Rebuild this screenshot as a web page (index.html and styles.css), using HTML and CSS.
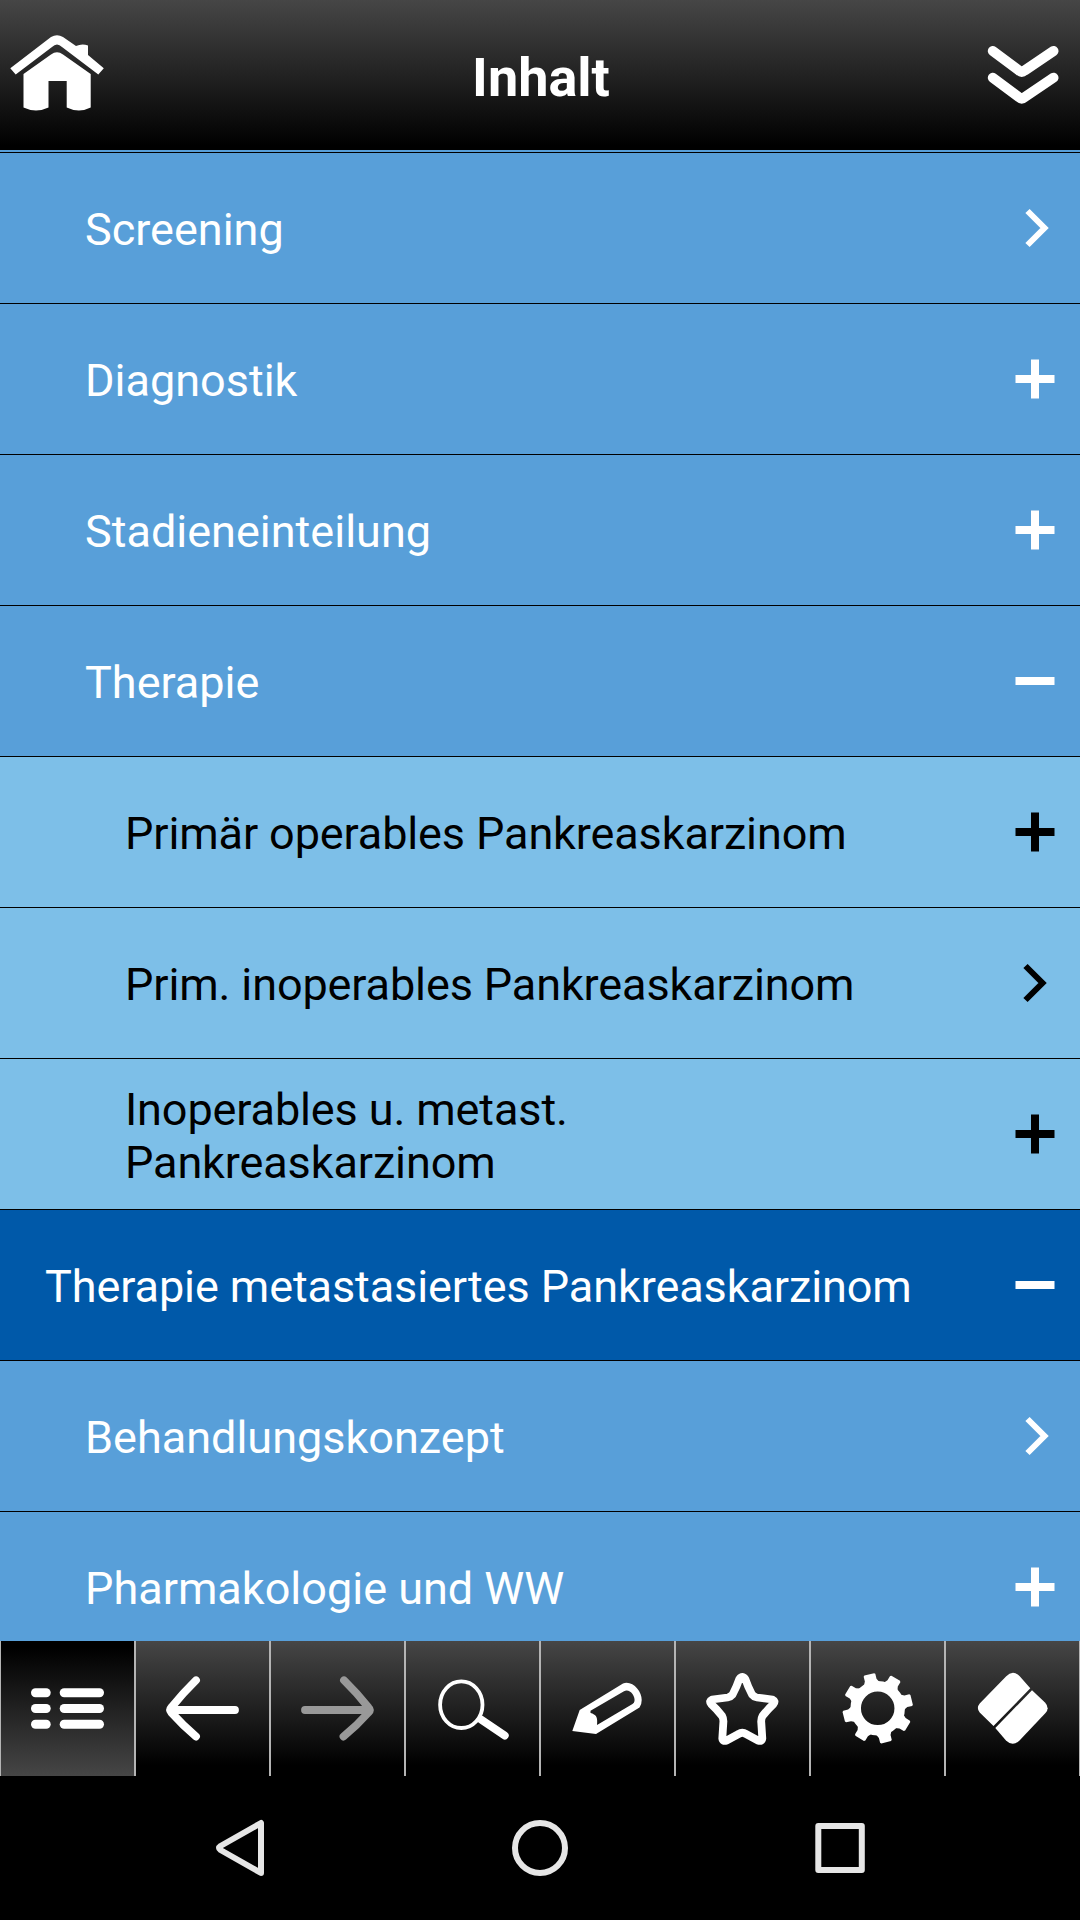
FILE: index.html
```html
<!DOCTYPE html>
<html lang="de">
<head>
    <meta charset="UTF-8">
    <meta name="viewport" content="width=device-width, initial-scale=1.0">
    <title>Inhalt</title>
    <link rel="stylesheet" href="styles.css">
</head>
<body>

<!-- Shared icons -->
<svg class="sprite">
    <symbol id="plus" viewBox="0 0 40 40"><path d="M0.5 20H39.5M20 0.5V39.5" stroke="currentColor" stroke-width="8"/></symbol>
    <symbol id="minus" viewBox="0 0 40 40"><path d="M0.5 20H39.5" stroke="currentColor" stroke-width="8"/></symbol>
    <symbol id="next" viewBox="0 0 40 40"><path d="M12.5 3L29.5 20L12.5 37" fill="none" stroke="currentColor" stroke-width="6"/></symbol>
</svg>

<div class="screen">
    <!-- Header -->
    <header class="header">
        <svg class="header-icon" viewBox="0 0 114 150">
            <path d="M10.3 68.3L51 37Q57 33.4 63 37L76 46Q82 43.2 88 45.5V55L103.8 68.3L98.3 74.5L62 47Q57 42 52 47L15.7 74.5Z"/>
            <path d="M23.5 74L51 54.5Q57 50 63 54.5L90.7 74V107.5Q79 113.5 66.7 107.5V81H48.5V107.5Q36 113.5 23.5 107.5Z"/>
        </svg>
        <h1>Inhalt</h1>
        <svg class="header-icon" viewBox="0 0 114 150">
            <path class="line" stroke-width="10" d="M26.8 51L53 70.5Q55.7 73 58.7 70.5L87.5 51M26.8 77.7L53 97.2Q55.7 99.7 58.7 97.2L87.5 77.7"/>
        </svg>
    </header>

    <!-- Table of contents -->
    <ul class="list">
        <li class="row level2"><span>Screening</span><svg><use href="#next"/></svg></li>
        <li class="row level2"><span>Diagnostik</span><svg><use href="#plus"/></svg></li>
        <li class="row level2"><span>Stadieneinteilung</span><svg><use href="#plus"/></svg></li>
        <li class="row level2"><span>Therapie</span><svg><use href="#minus"/></svg></li>
        <li class="row level3"><span>Primär operables Pankreaskarzinom</span><svg><use href="#plus"/></svg></li>
        <li class="row level3"><span>Prim. inoperables Pankreaskarzinom</span><svg class="arrow"><use href="#next"/></svg></li>
        <li class="row level3"><span>Inoperables u. metast.<br>Pankreaskarzinom</span><svg><use href="#plus"/></svg></li>
        <li class="row level1"><span>Therapie metastasiertes Pankreaskarzinom</span><svg><use href="#minus"/></svg></li>
        <li class="row level2"><span>Behandlungskonzept</span><svg><use href="#next"/></svg></li>
        <li class="row level2"><span>Pharmakologie und WW</span><svg><use href="#plus"/></svg></li>
    </ul>

    <!-- Toolbar -->
    <nav class="toolbar">
        <div class="tool active">
            <svg viewBox="1 0 133 135">
                <rect x="31" y="47.3" width="19.7" height="9" rx="4.5"/>
                <rect x="59.7" y="47.3" width="44.3" height="9" rx="4.5"/>
                <rect x="31" y="63" width="19.7" height="9" rx="4.5"/>
                <rect x="59.7" y="63" width="44.3" height="9" rx="4.5"/>
                <rect x="31" y="78.8" width="19.7" height="9" rx="4.5"/>
                <rect x="59.7" y="78.8" width="44.3" height="9" rx="4.5"/>
            </svg>
        </div>
        <div class="tool">
            <svg viewBox="1 0 133 135"><path class="line" stroke-width="7.8" d="M61 39.3Q48 52 36.3 66.5Q34 69 36.3 71.5Q48 84.5 61 95.5M36.5 69H100"/></svg>
        </div>
        <div class="tool disabled">
            <svg viewBox="1 0 133 135"><path class="line" stroke-width="7.8" d="M74 39.3Q87 52 98.5 66.5Q101 69 98.5 71.5Q87 84.5 73.5 95.5M35 69H98"/></svg>
        </div>
        <div class="tool">
            <svg viewBox="1 0 133 135">
                <ellipse class="line" stroke-width="3.8" cx="56.3" cy="63.7" rx="21.2" ry="23.3"/>
                <path class="line" stroke-width="8" d="M76 78.5L99.7 94.5"/>
            </svg>
        </div>
        <div class="tool">
            <svg viewBox="1 0 133 135"><path fill-rule="evenodd" d="M32.3 90L39.7 69L83 42.5C92 39 102 50 101.7 59Q101.7 64 99.5 66.5L56 93ZM50.5 69.7L84 50.3C89 47 95.5 54.5 94.5 60Q94.3 62 92.5 63L57 84C58 76 56 73.5 50.5 72Z"/></svg>
        </div>
        <div class="tool">
            <svg viewBox="1 0 133 135"><path class="line" stroke-width="7.8" d="M64.3 38Q67.3 34 70.3 38Q73 46 77 53.5Q79 56 82 56.5L97.5 58.5Q101 60 98.5 63Q93 68 87.5 75Q85.8 78 86.3 82L87.3 97.5Q87 101 83 99.5L71 93Q67.3 90.3 63.6 93L51.6 99.5Q47.6 101 47.3 97.5L48.3 82Q48.8 78 47.1 75Q41.6 68 36.1 63Q33.6 60 37.1 58.5L52.6 56.5Q55.6 56 57.6 53.5Q61.6 46 64.3 38Z"/></svg>
        </div>
        <div class="tool">
            <svg viewBox="1 0 133 135">
                <circle class="line" stroke-width="10.5" cx="67.7" cy="67.3" r="22"/>
                <g transform="translate(67.7 67.3) rotate(-14)">
                    <path id="tooth" d="M-8 -25L-6 -29V-34L-5 -35H5L6 -34V-29L8 -25Z"/>
                    <use href="#tooth" transform="rotate(45)"/>
                    <use href="#tooth" transform="rotate(90)"/>
                    <use href="#tooth" transform="rotate(135)"/>
                    <use href="#tooth" transform="rotate(180)"/>
                    <use href="#tooth" transform="rotate(225)"/>
                    <use href="#tooth" transform="rotate(270)"/>
                    <use href="#tooth" transform="rotate(315)"/>
                </g>
            </svg>
        </div>
        <div class="tool">
            <svg viewBox="1 0 133 135">
                <path d="M61 35.5Q67.7 28.5 74.5 35L85.3 47.3L48.5 85L34.7 71.5Q31 67 34.7 62.5Z"/>
                <path d="M87 49.2L100 61.5Q105 67 100.5 72L74.5 99.5Q67.7 106 61 99.5L50.3 87Z"/>
            </svg>
        </div>
    </nav>

    <!-- System navigation -->
    <div class="navbar">
        <svg viewBox="0 0 60 60"><path class="line" stroke-width="6" d="M51 5V55L10.5 32Q7.5 30 10.5 28Z"/></svg>
        <svg viewBox="0 0 60 60"><circle class="line" stroke-width="6" cx="30" cy="30" r="25"/></svg>
        <svg viewBox="0 0 60 60"><rect class="line" stroke-width="6" x="8.3" y="8" width="43.5" height="44"/></svg>
    </div>
</div>

</body>
</html>
```
FILE: styles.css
```css
* {
    box-sizing: border-box;
}

body {
    margin: 0;
    background-color: #000;
    font-family: Roboto, sans-serif;
    color: #fff;
}

svg {
    display: block;
    fill: currentColor;
}

.sprite {
    display: none;
}

.line {
    fill: none;
    stroke: currentColor;
    stroke-linecap: round;
    stroke-linejoin: round;
}

.screen {
    display: flex;
    flex-direction: column;
    width: 1080px;
    height: 1920px;
    overflow: hidden;
}

.header {
    display: flex;
    flex: none;
    align-items: center;
    justify-content: space-between;
    height: 150px;
    background: linear-gradient(#464646, #000 97%);
}

.header h1 {
    margin: 0;
    padding: 4px 0 0 2px;
    font-size: 54px;
    font-weight: 700;
}

.header-icon {
    width: 114px;
    height: 150px;
}

.list {
    flex: 1;
    min-height: 0;
    margin: 0;
    padding: 2px 0 0;
    overflow: hidden;
    list-style: none;
    background-color: #589fd9;
}

.row {
    display: flex;
    align-items: center;
    justify-content: space-between;
    height: 151px;
    padding-right: 25px;
    border-bottom: 1px solid #000;
    font-size: 45px;
    line-height: 53px;
}

.row:first-child {
    height: 152px;
    border-top: 1px solid #000;
}

.row span {
    padding-top: 3px;
}

.row svg {
    width: 40px;
    height: 40px;
}

.level1 {
    padding-left: 45px;
    background-color: #0059a9;
    letter-spacing: -0.09px;
}

.level2 {
    padding-left: 85px;
    background-color: #589fd9;
}

.level3 {
    padding-left: 125px;
    background-color: #7dbfe8;
    color: #000;
    letter-spacing: -0.12px;
}

.row .arrow {
    margin-right: 2px;
}

.toolbar {
    display: flex;
    flex: none;
    height: 135px;
}

.tool {
    width: 135px;
    border: solid #b4b4b4;
    border-width: 0 1px;
    background: linear-gradient(#464646, #000 92%);
}

.tool svg {
    width: 133px;
    height: 135px;
}

.tool.active {
    background: linear-gradient(#000 5%, #464646);
}

.tool.disabled svg {
    color: #999;
}

.navbar {
    display: flex;
    flex: none;
    align-items: center;
    justify-content: center;
    gap: 240px;
    height: 144px;
    color: #e6e6e6;
}

.navbar svg {
    width: 60px;
    height: 60px;
}
```
